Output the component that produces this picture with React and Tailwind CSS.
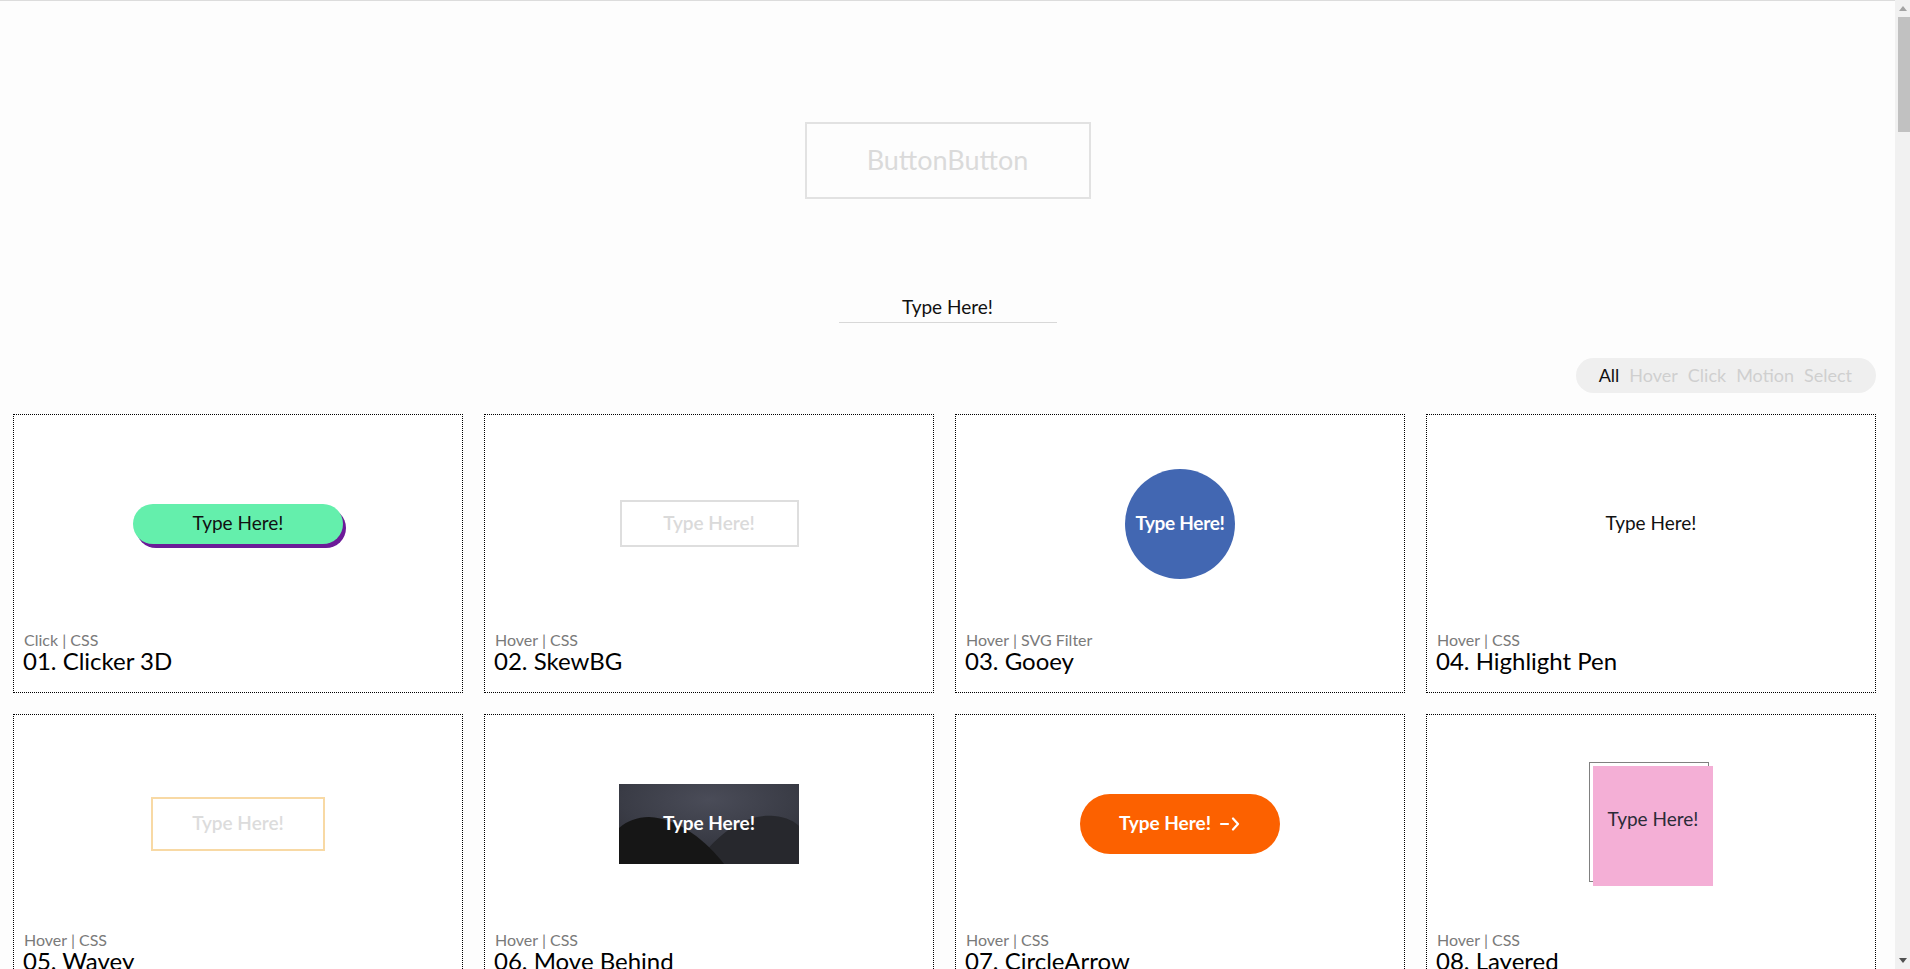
import React from "react";

const font = { fontFamily: "Lato, 'Open Sans', 'Liberation Sans', sans-serif" };

function Card({ tag, title, children }) {
  return (
    <div className="h-[279px] flex flex-col border border-dotted border-black bg-white">
      <div className="h-[217px] flex items-center justify-center shrink-0">{children}</div>
      <div className="pl-[10px] text-[16px] leading-[16px] text-[#7a7a7a]">{tag}</div>
      <div className="pl-[9px] text-[24px] leading-[26px] text-black">{title}</div>
    </div>
  );
}

function Clicker() {
  return (
    <div className="w-[210px] h-[40px] rounded-full bg-[#64efac] shadow-[3px_4px_0_0_#6c1a98] flex items-center justify-center text-[19px] text-[#111]">
      Type Here!
    </div>
  );
}

function Skew() {
  return (
    <div className="w-[179px] h-[47px] border-2 border-[#dedede] flex items-center justify-center text-[19px] font-semibold text-[#dadada]">
      Type Here!
    </div>
  );
}

function Gooey() {
  return (
    <div className="w-[110px] h-[110px] rounded-full bg-[#4267b2] flex items-center justify-center text-[19px] font-bold text-white tracking-[-0.3px]">
      Type Here!
    </div>
  );
}

function Highlight() {
  return <div className="text-[19px] text-[#111]">Type Here!</div>;
}

function Wavey() {
  return (
    <div className="w-[174px] h-[54px] border-2 border-[#f8d9a4] flex items-center justify-center text-[19px] font-semibold text-[#dcdcdc]">
      Type Here!
    </div>
  );
}

function MoveBehind() {
  return (
    <div className="relative w-[180px] h-[80px] overflow-hidden flex items-center justify-center">
      <svg className="absolute inset-0" width="180" height="80" viewBox="0 0 180 80">
        <defs>
          <radialGradient id="mbg" cx="50%" cy="20%" r="80%">
            <stop offset="0%" stopColor="#4a4c58" />
            <stop offset="60%" stopColor="#3a3c46" />
            <stop offset="100%" stopColor="#2c2d34" />
          </radialGradient>
        </defs>
        <rect width="180" height="80" fill="url(#mbg)" />
        <path d="M88 66 C110 40 135 30 155 32 C168 33 176 38 180 42 L180 80 L80 80 Z" fill="#27282d" />
        <path d="M0 44 C8 37 18 33 30 33 C60 34 88 58 105 80 L0 80 Z" fill="#161616" />
      </svg>
      <span className="relative text-[19px] font-bold text-white">Type Here!</span>
    </div>
  );
}

function CircleArrow() {
  return (
    <div className="w-[200px] h-[60px] rounded-full bg-[#fc6100] flex items-center justify-center gap-[8px] text-[19px] font-bold text-white">
      <span>Type Here!</span>
      <svg width="22" height="14" viewBox="0 0 22 14" fill="none" stroke="white" strokeWidth="2.2" strokeLinecap="round" strokeLinejoin="round">
        <path d="M2 7 H9" />
        <path d="M14 1.5 L19 7 L14 12.5" />
      </svg>
    </div>
  );
}

function Layered() {
  return (
    <div className="relative w-[124px] h-[124px]">
      <div className="absolute left-0 top-0 w-[120px] h-[120px] border border-[#808080]" />
      <div className="absolute left-[4px] top-[4px] w-[120px] h-[120px] bg-[#f4afd6] flex items-center justify-center pb-[12px] text-[19px] text-[#2b2b38]">
        Type Here!
      </div>
    </div>
  );
}

function Scrollbar() {
  return (
    <div className="w-[15px] shrink-0 bg-[#f1f1f1] flex flex-col items-center">
      <div className="h-[17px] w-full flex items-center justify-center">
        <svg width="8" height="5" viewBox="0 0 8 5"><path d="M0 5 L4 0 L8 5 Z" fill="#a3a3a3" /></svg>
      </div>
      <div className="ml-[2px] w-[12px] h-[115px] bg-[#c1c1c1]" />
      <div className="flex-1" />
      <div className="h-[17px] w-full flex items-center justify-center">
        <svg width="8" height="5" viewBox="0 0 8 5"><path d="M0 0 L8 0 L4 5 Z" fill="#505050" /></svg>
      </div>
    </div>
  );
}

export default function App() {
  return (
    <div className="flex h-[969px] overflow-hidden bg-[#fdfdfd]" style={font}>
      <div className="flex-1 min-w-0 overflow-hidden border-t border-[#dcdcdc]">
        <div className="pt-[121px] flex flex-col items-center">
          <div className="w-[286px] h-[77px] border-2 border-[#e2e2e2] flex items-center justify-center text-[27px] text-[#dadada]">
            ButtonButton
          </div>
          <div className="mt-[96px] w-[218px] h-[28px] leading-[24px] border-b border-[#d8d8d8] text-center text-[19px] text-[#111]">
            Type Here!
          </div>
        </div>

        <div className="mt-[35px] flex justify-end pr-[19px]">
          <div className="h-[35px] rounded-full bg-[#efefef] pl-[23px] pr-[24px] flex items-center gap-[10px] text-[18px]">
            <span className="text-[#111]">All</span>
            <span className="text-[#cfcfcf]">Hover</span>
            <span className="text-[#cfcfcf]">Click</span>
            <span className="text-[#cfcfcf]">Motion</span>
            <span className="text-[#cfcfcf]">Select</span>
          </div>
        </div>

        <div className="mt-[21px] pl-[13px] pr-[19px] grid grid-cols-4 gap-[21px]">
          <Card tag="Click | CSS" title="01. Clicker 3D"><Clicker /></Card>
          <Card tag="Hover | CSS" title="02. SkewBG"><Skew /></Card>
          <Card tag="Hover | SVG Filter" title="03. Gooey"><Gooey /></Card>
          <Card tag="Hover | CSS" title="04. Highlight Pen"><Highlight /></Card>
          <Card tag="Hover | CSS" title="05. Wavey"><Wavey /></Card>
          <Card tag="Hover | CSS" title="06. Move Behind"><MoveBehind /></Card>
          <Card tag="Hover | CSS" title="07. CircleArrow"><CircleArrow /></Card>
          <Card tag="Hover | CSS" title="08. Layered"><Layered /></Card>
        </div>
      </div>
      <Scrollbar />
    </div>
  );
}
